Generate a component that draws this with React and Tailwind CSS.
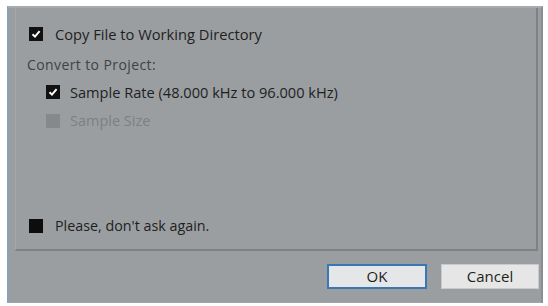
import React from "react";

function Check({ state }) {
  if (state === "checked") {
    return (
      <div className="w-[14px] h-[14px] bg-[#111] flex items-center justify-center shrink-0">
        <svg width="10" height="10" viewBox="0 0 10 10">
          <path d="M1.5 5.2 L4 7.6 L8.6 2.2" stroke="#fff" strokeWidth="2" fill="none" />
        </svg>
      </div>
    );
  }
  if (state === "disabled") {
    return <div className="w-[14px] h-[14px] bg-[#86898c] shrink-0" />;
  }
  return <div className="w-[14px] h-[14px] bg-[#0d0d0d] shrink-0" />;
}

export default function App() {
  return (
    <div className="w-[548px] h-[306px] bg-white pt-[6px] pl-[7px]" style={{ fontFamily: '"Open Sans", "Liberation Sans", sans-serif' }}>
      <div className="w-[536px] h-[297px] bg-[#9b9ea1] border-l-[2px] border-l-[#8aa0b5] border-t-[2px] border-t-[#a8abae] border-r-[2px] border-r-[#8a8d92] border-b border-b-[#a3a6a9] flex flex-col">
        <div className="ml-[6px] w-[523px] h-[243px] border-r-[2px] border-r-[#7e8185] border-b-[2px] border-b-[#7e8185] border-l border-l-[#a5a8ab] flex flex-col">
          <div className="flex items-center gap-[12px] ml-[13px] mt-[19px] h-[14px]">
            <Check state="checked" />
            <span className="text-[14.7px] text-[#1e1f21] leading-none">Copy File to Working Directory</span>
          </div>
          <div className="ml-[11px] mt-[17px] text-[14px] tracking-[0.4px] text-[#3f4245] leading-none">Convert to Project:</div>
          <div className="flex items-center gap-[10px] ml-[30px] mt-[13px] h-[14px]">
            <Check state="checked" />
            <span className="text-[14.6px] text-[#1e1f21] leading-none">Sample Rate (48.000 kHz to 96.000 kHz)</span>
          </div>
          <div className="flex items-center gap-[10px] ml-[30px] mt-[15px] h-[14px]">
            <Check state="disabled" />
            <span className="text-[14.5px] text-[#7d8083] leading-none">Sample Size</span>
          </div>
          <div className="flex items-center gap-[12px] ml-[13px] mt-[91px] h-[14px]">
            <Check state="unchecked" />
            <span className="text-[14.3px] text-[#1e1f21] leading-none">Please, don't ask again.</span>
          </div>
        </div>
        <div className="flex justify-end gap-[14px] mr-[2px] mt-[13px]">
          <button className="w-[100px] h-[25px] bg-[#e4e6e8] border-[2px] border-[#3a78b5] text-[15px] text-[#1e1f21] leading-none">OK</button>
          <button className="w-[98px] h-[25px] bg-[#e6e6e6] border border-[#c9cacc] text-[15px] text-[#1e1f21] leading-none">Cancel</button>
        </div>
      </div>
    </div>
  );
}
